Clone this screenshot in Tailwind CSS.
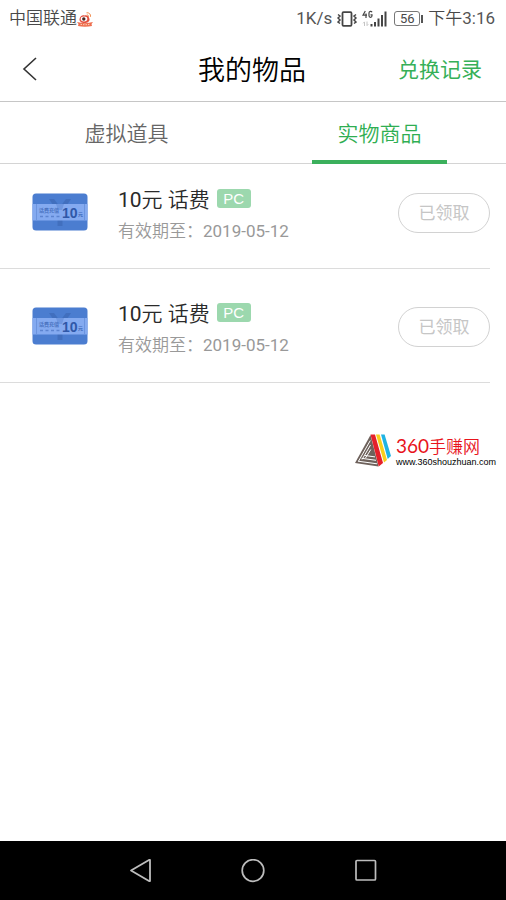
<!DOCTYPE html>
<html lang="zh-CN">
<head>
<meta charset="utf-8">
<meta name="viewport" content="width=device-width, initial-scale=1">
<title>我的物品</title>
<script src="https://cdn.jsdelivr.net/npm/@tailwindcss/browser@4"></script>
</head>
<body class="flex min-h-screen flex-col bg-white font-['Roboto','Noto_Sans_CJK_SC',sans-serif] font-[350] text-[#2d2d2d]">

<svg class="hidden" aria-hidden="true">
  <symbol id="ticket" viewBox="0 0 56 38">
    <rect x="0.5" y="0.5" width="55" height="37" rx="3.5" fill="#4b7dd0"/>
    <path d="M17 6h5l6 8 6-8h5l-8 12h-6z" fill="#3d6bb8" opacity=".75"/>
    <path d="M25.500 27h5v6h-5z" fill="#3d6bb8" opacity=".75"/>
    <rect x="0.500" y="11" width="55" height="16.500" fill="#84aaf0"/>
    <path d="M24 11h8l-2 6h-4z" fill="#6f97e0"/>
    <path d="M4.500 11v16.500M52.500 11v16.500" stroke="#6c94de" stroke-width="1"/>
    <text x="7" y="19" font-size="5" font-weight="700" fill="#4a72c0">话费充值</text>
    <path d="M8 23.500h3M13.500 23.500h3M19 23.500h3M24.500 23.500h3" stroke="#5c84d0" stroke-width="1.500"/>
    <text x="30" y="24.500" font-size="14" font-weight="700" font-family="Liberation Sans, sans-serif" fill="#2f58a8">10</text>
    <text x="46" y="22.500" font-size="5" font-weight="700" fill="#3f69b8">元</text>
  </symbol>
</svg>

<div class="flex h-9 items-center justify-between pt-px pr-[11px] pl-[9px] text-[17px] text-[#484848]">
  <div class="flex items-center">
    <span>中国联通</span>
    <svg class="h-4 w-4" viewBox="0 0 16 16" aria-hidden="true">
      <path d="M2.500 8C3 4.500 6 3.500 7.500 4.500c2-1 4.500.5 5 3.500.3 2.500-2 4-5 4s-5.300-1.500-5-4z" fill="#e4503f"/>
      <ellipse cx="7" cy="8" rx="3.300" ry="2.400" fill="#fff"/>
      <circle cx="6.800" cy="8" r="1.700" fill="#4a2723"/>
      <path d="M9.500 1.800c2.500-.5 4.500 1.500 4 4M9.800 4c1.200-.2 2 .7 1.800 1.800" fill="none" stroke="#f08a4c" stroke-width="1"/>
      <path d="M0 11c5 1.500 11 1.500 16 0l-1.500 2 .5 2c-4.500 1-9.500 1-14 0l.5-2z" fill="#ee6f4f"/>
      <path d="M3.500 13.300c3 .6 6 .6 9 0" stroke="#fbd0b8" stroke-width="1" stroke-dasharray="1.500 1" fill="none"/>
    </svg>
  </div>
  <div class="flex items-center">
    <span class="font-normal text-[#555]">1K/s</span>
    <svg class="ml-[5px] h-4 w-5" viewBox="0 0 20 16" aria-hidden="true" fill="none" stroke="#454545">
      <rect x="5.500" y="1.200" width="9" height="13.600" rx="1" stroke-width="1.800"/>
      <path d="M1 3.500l2 1.500-2 2 2 2-2 2 2 1.500M19 3.500l-2 1.500 2 2-2 2 2 2-2 1.500" stroke-width="1.500"/>
    </svg>
    <svg class="ml-[5px] h-[18px] w-[26px]" viewBox="0 0 26 18" aria-hidden="true">
      <path d="M3.300 1L1 5.200h4M4 3.500V8M10 2.300C9.500 1 7 1 7 3v2.800c0 2 3 2 3 0V4.800H8.500" fill="none" stroke="#454545" stroke-width="1.200"/>
      <path d="M2.500 16v-4M1.200 13.300l1.300-1.500M5 11.500v4M6.300 14.200L5 15.700" stroke="#c4c4c4" fill="none"/>
      <path d="M8.500 14h2v2.500h-2zM12 12h2v4.500h-2zM15.500 8.500h2v8h-2zM19 5h2v11.500h-2zM22.500 1.500h2v15h-2z" fill="#454545"/>
    </svg>
    <span class="ml-[6px] flex h-[15px] w-[26px] items-center justify-center rounded-[3px] border border-[#777] text-[13px] leading-none font-normal">56</span>
    <span class="ml-px h-2 w-[2px] bg-[#555]"></span>
    <span class="ml-[5px]">下午<span class="font-normal text-[#555]">3:16</span></span>
  </div>
</div>

<header class="grid h-[66px] grid-cols-[1fr_auto_1fr] items-center border-b border-[#c6c6c6] pr-6 pl-[22px]">
  <button type="button" aria-label="返回" class="w-6">
    <svg class="h-6 w-4" viewBox="0 0 16 24" fill="none" stroke="#333" stroke-width="1.600"><path d="M14 1L2 12l12 11"/></svg>
  </button>
  <h1 class="pt-1 text-[27px] leading-8 text-black">我的物品</h1>
  <a href="#" class="justify-self-end pt-0.5 text-[21px] leading-8 font-normal text-[#36b058]">兑换记录</a>
</header>

<nav class="grid h-[62px] grid-cols-2 border-b border-[#d4d4d4] text-[21px]">
  <a href="#" class="flex items-center justify-center pt-1 text-[#666]">虚拟道具</a>
  <a href="#" aria-current="page" class="flex flex-col items-center text-[#2fae52]">
    <span class="flex flex-1 items-center pt-2">实物商品</span>
    <span class="-mb-px h-1 w-[135px] bg-[#3bb05c]"></span>
  </a>
</nav>

<main class="flex-1">
  <ul class="-mt-[9px] mr-4">
    <li class="flex h-[114px] items-start border-b border-[#dcdcdc] pt-[38px] pl-8">
      <svg class="h-[38px] w-14" role="img" aria-label="10元话费券"><use href="#ticket"/></svg>
      <div class="-mt-[7px] ml-[30px] flex-1">
        <h2 class="flex items-start gap-[7px] text-[21px] leading-7 text-[#2a2a2a]"><span><span class="font-normal">10</span>元 话费</span><span class="mt-[3px] flex h-[19px] w-[34px] items-center justify-center rounded-[3px] bg-[#9cd8ae] font-['Liberation_Sans',sans-serif] text-[15px] font-normal text-white">PC</span></h2>
        <p class="mt-[5px] text-[17px] leading-6 text-[#999]">有效期至：<span class="font-normal">2019-05-12</span></p>
      </div>
      <button type="button" class="h-10 w-[92px] rounded-full border border-[#d2d2d2] pt-0.5 text-[17px] font-normal text-[#c6c6c6]">已领取</button>
    </li>
    <li class="flex h-[114px] items-start border-b border-[#dcdcdc] pt-[38px] pl-8">
      <svg class="h-[38px] w-14" role="img" aria-label="10元话费券"><use href="#ticket"/></svg>
      <div class="-mt-[7px] ml-[30px] flex-1">
        <h2 class="flex items-start gap-[7px] text-[21px] leading-7 text-[#2a2a2a]"><span><span class="font-normal">10</span>元 话费</span><span class="mt-[3px] flex h-[19px] w-[34px] items-center justify-center rounded-[3px] bg-[#9cd8ae] font-['Liberation_Sans',sans-serif] text-[15px] font-normal text-white">PC</span></h2>
        <p class="mt-[5px] text-[17px] leading-6 text-[#999]">有效期至：<span class="font-normal">2019-05-12</span></p>
      </div>
      <button type="button" class="h-10 w-[92px] rounded-full border border-[#d2d2d2] pt-0.5 text-[17px] font-normal text-[#c6c6c6]">已领取</button>
    </li>
  </ul>

  <div class="mt-[50px] mr-[7px] flex items-start justify-end gap-1">
    <svg class="h-[34px] w-[37px]" viewBox="0 0 37 34" aria-hidden="true">
      <path d="M15.500 2L0 30l23.500 3.500z" fill="#6e625c"/>
      <path d="M15.300 7.500L3.500 28.200M15.500 12L7 26.500M15.800 16.500L10.500 25M3 28.200l19 2.600M6.500 25.300l14.500 2M10 22.500l10 1.400" stroke="#fff" stroke-width="1" fill="none"/>
      <path d="M15.500 1.500H20L28 30l-4.300 3.500z" fill="#e5202a"/>
      <path d="M21 1.500h3.600L32 27l-3 2.500z" fill="#f8cf1c"/>
      <path d="M26 1.500h3.600L36 23l-3.300 3z" fill="#1fb4e4"/>
    </svg>
    <div class="w-[103px]">
      <p class="mt-[3px] text-[17px] leading-5 text-[#e8141c]"><span class="font-['Lato',sans-serif] text-[19px] font-normal">360</span>手赚网</p>
      <p class="font-['Liberation_Sans',sans-serif] text-[9px] leading-[10px] font-normal text-black">www.360shouzhuan.com</p>
    </div>
  </div>
</main>

<footer class="grid h-[59px] grid-cols-[1fr_auto_auto_auto_1fr] items-center gap-[88px] bg-black">
  <span></span>
  <button type="button" aria-label="返回" class="w-6"><svg class="h-6 w-6" viewBox="0 0 24 24" fill="none" stroke="#bdbdbd" stroke-width="1.800" stroke-linejoin="round"><path d="M2 11.500L20 1h1v21h-1z"/></svg></button>
  <button type="button" aria-label="主屏幕" class="w-6"><svg class="h-6 w-6" viewBox="0 0 24 24" fill="none" stroke="#bdbdbd" stroke-width="1.700"><circle cx="12" cy="11.500" r="10.800"/></svg></button>
  <button type="button" aria-label="最近任务" class="w-6"><svg class="h-6 w-6" viewBox="0 0 24 24" fill="none" stroke="#bdbdbd" stroke-width="1.700"><rect x="3" y="1.500" width="19.500" height="19.500" rx="1"/></svg></button>
  <span></span>
</footer>
</body>
</html>
